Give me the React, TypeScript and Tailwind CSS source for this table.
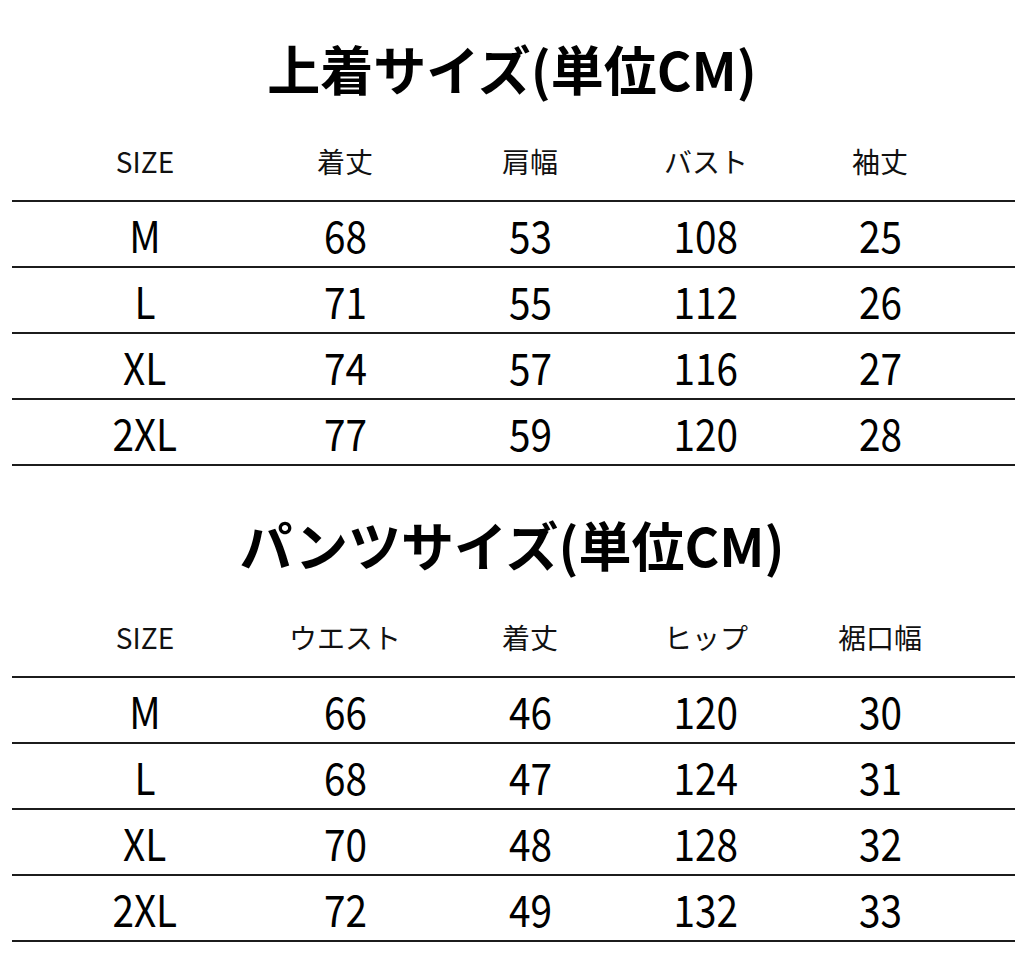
const jacket = {
  title: "上着サイズ(単位CM)",
  headers: ["SIZE", "着丈", "肩幅", "バスト", "袖丈"],
  rows: [
    ["M", "68", "53", "108", "25"],
    ["L", "71", "55", "112", "26"],
    ["XL", "74", "57", "116", "27"],
    ["2XL", "77", "59", "120", "28"],
  ],
};

const pants = {
  title: "パンツサイズ(単位CM)",
  headers: ["SIZE", "ウエスト", "着丈", "ヒップ", "裾口幅"],
  rows: [
    ["M", "66", "46", "120", "30"],
    ["L", "68", "47", "124", "31"],
    ["XL", "70", "48", "128", "32"],
    ["2XL", "72", "49", "132", "33"],
  ],
};

const font = { fontFamily: '"Noto Sans CJK JP", "Noto Sans", sans-serif' };

const SizeTable = ({ data }: { data: typeof jacket }) => (
  <div>
    {/* Title */}
    <div className="h-[84px] pb-[8px] flex items-center justify-center">
      <h2 className="text-[53px] font-bold text-black leading-none">{data.title}</h2>
    </div>

    {/* Header */}
    <div className="mt-2 ml-[12px] w-[1003px] h-[80px] grid grid-cols-[266px_134px_236px_116px_232px] items-center border-b-2 border-[#1c1c1c]">
      {data.headers.map((h, i) => (
        <div key={i} className="flex justify-center whitespace-nowrap text-[28px] text-[#111] leading-none">
          {h}
        </div>
      ))}
    </div>

    {/* Rows */}
    {data.rows.map((row, r) => (
      <div
        key={r}
        className="ml-[12px] w-[1003px] h-[66px] grid grid-cols-[266px_134px_236px_116px_232px] items-center border-b-2 border-[#1c1c1c]"
      >
        {row.map((cell, i) => (
          <div key={i} className="flex justify-center whitespace-nowrap text-[44px] text-black leading-none">
            <span className="inline-block scale-x-[0.88]">{cell}</span>
          </div>
        ))}
      </div>
    ))}
  </div>
);

export default function App() {
  return (
    <div className="w-[1024px] h-[980px] bg-white overflow-hidden pt-[30px]" style={font}>
      <SizeTable data={jacket} />
      <div className="mt-[40px]">
        <SizeTable data={pants} />
      </div>
    </div>
  );
}
